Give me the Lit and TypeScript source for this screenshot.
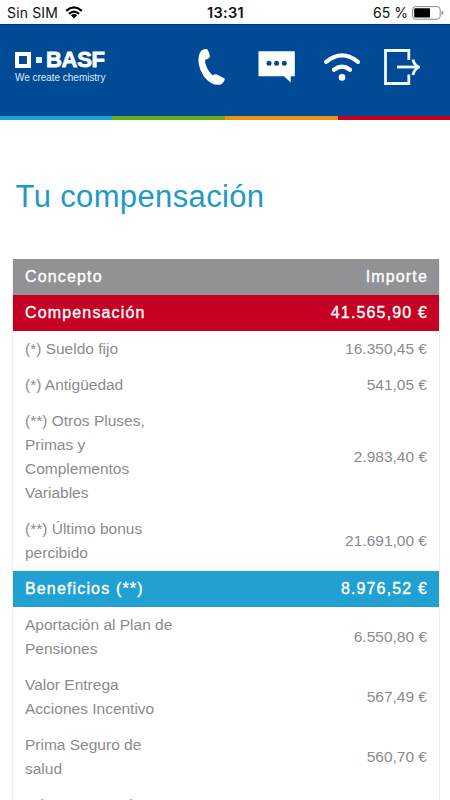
import { LitElement, html, css, svg } from "lit";
import { customElement } from "lit/decorators.js";
import { classMap } from "lit/directives/class-map.js";

interface Row {
  concept: string[];
  amount: string;
  kind?: "head" | "red" | "blue";
}

const ROWS: Row[] = [
  { concept: ["Concepto"], amount: "Importe", kind: "head" },
  { concept: ["Compensación"], amount: "41.565,90 €", kind: "red" },
  { concept: ["(*) Sueldo fijo"], amount: "16.350,45 €" },
  { concept: ["(*) Antigüedad"], amount: "541,05 €" },
  { concept: ["(**) Otros Pluses,", "Primas y", "Complementos", "Variables"], amount: "2.983,40 €" },
  { concept: ["(**) Último bonus", "percibido"], amount: "21.691,00 €" },
  { concept: ["Beneficios (**)"], amount: "8.976,52 €", kind: "blue" },
  { concept: ["Aportación al Plan de", "Pensiones"], amount: "6.550,80 €" },
  { concept: ["Valor Entrega", "Acciones Incentivo"], amount: "567,49 €" },
  { concept: ["Prima Seguro de", "salud"], amount: "560,70 €" },
  { concept: ["Prima Seguro de"], amount: "" },
];

@customElement("status-bar")
export class StatusBar extends LitElement {
  static styles = css`
    :host {
      display: grid;
      grid-template-columns: 1fr auto 1fr;
      align-items: center;
      height: 24px;
      box-sizing: border-box;
      padding: 1px 6px 0 7px;
      background: #fff;
      color: #111;
      font: 14px/22px Inter, "Liberation Sans", sans-serif;
    }
    .side { display: flex; align-items: center; }
    .carrier { gap: 7px; letter-spacing: 0.15px; }
    .clock { font-weight: 600; font-size: 14.5px; letter-spacing: 0.3px; }
    .power { justify-content: flex-end; gap: 4px; letter-spacing: 0; }
    svg { display: block; }
  `;
  render() {
    return html`
      <div class="side carrier">
        <span>Sin SIM</span>
        <svg width="18" height="13" viewBox="0 0 18 13">
          <g fill="none" stroke="#000" stroke-width="2.3">
            <path d="M1.2 4.8Q9-2 16.8 4.8" />
            <path d="M4 7.8Q9 3.4 14 7.8" />
          </g>
          <path d="M5.8 9.3Q9 6.8 12.2 9.3L9 12.5z" />
        </svg>
      </div>
      <div class="clock">13:31</div>
      <div class="side power">
        <span>65 %</span>
        <svg width="32" height="14" viewBox="0 0 32 14">
          <rect x=".6" y=".6" width="27.6" height="12.6" rx="3" fill="none" stroke="#888" />
          <rect x="2.2" y="2.2" width="15.8" height="9.4" rx="1" />
          <path d="M29.6 4.7q2 .6 2 2.2t-2 2.2z" fill="#888" />
        </svg>
      </div>
    `;
  }
}

@customElement("brand-header")
export class BrandHeader extends LitElement {
  static styles = css`
    :host {
      display: block;
      height: 96px;
      background: #004a96;
      box-shadow: inset 0 1px #00347f;
      color: #fff;
      font-family: "Liberation Sans", Arial, sans-serif;
    }
    .bar {
      display: flex;
      justify-content: space-between;
      height: 92px;
      box-sizing: border-box;
      padding: 23px 30px 0 15px;
    }
    .logo { padding-top: 4px; }
    .mark { display: flex; align-items: center; height: 17px; }
    .square { width: 8px; height: 8px; border: 4px solid #fff; }
    .dot { width: 6px; height: 6px; margin: 0 4px 0 5px; background: #e4f4ff; }
    .name {
      font-weight: 700;
      font-size: 22px;
      line-height: 17px;
      letter-spacing: -0.3px;
      -webkit-text-stroke: 0.8px #fff;
    }
    .claim {
      margin-top: 4px;
      font-size: 10px;
      line-height: 12px;
      letter-spacing: -0.03px;
      white-space: nowrap;
      color: #dcecff;
    }
    .icons { display: block; width: 224px; height: 40px; }
    .stripe { display: grid; grid-template-columns: 112px 113px 113px 112px; height: 4px; }
    .sky { background: #21a0d2; }
    .green { background: #65ac1e; }
    .orange { background: #e8951a; }
    .crimson { background: #c50022; }
  `;
  render() {
    return html`
      <div class="bar">
        <div class="logo">
          <div class="mark">
            <div class="square"></div>
            <div class="dot"></div>
            <div class="name">BASF</div>
          </div>
          <div class="claim">We create chemistry</div>
        </div>
        <svg class="icons" viewBox="196 47 224 40">
          ${svg`
            <path fill="#fff" d="M201.500 50.500Q204.500 48.600 207.200 49.200Q208.900 51 210 56.700Q208.500 59 205 59.900Q205.200 68 212.500 75.300Q215.500 73.600 217.800 75L224.600 78.500Q225.300 80.500 221.800 84Q217 86 211.500 83.300Q201.500 77.500 198.700 64Q197.600 54.500 201.500 50.500Z"/>
            <path fill="#fff" d="M258.500 51.300H294.800V76.300H290.700V82.400L284 76.300H258.500Z"/>
            <g fill="#004a96"><circle cx="269" cy="63.200" r="2.500"/><circle cx="276.600" cy="63.200" r="2.500"/><circle cx="284.300" cy="63.200" r="2.500"/></g>
            <g fill="none" stroke="#fff" stroke-width="4.200" stroke-linecap="round">
              <path d="M326.200 61.800Q342 48.800 357.900 61.800"/>
              <path d="M334 69.700Q342 63.700 350 69.700"/>
            </g>
            <circle cx="342" cy="77.400" r="3.300" fill="#fff"/>
            <g fill="none" stroke="#f2f9ff" stroke-width="2.800">
              <path d="M408.800 60V50.500H385.500V83.500H408.800V74.500"/>
              <path d="M397 67H418"/>
              <path d="M413 59.500Q414 65 418.800 67Q414 69.500 413 75"/>
            </g>`}
        </svg>
      </div>
      <div class="stripe">
        <div class="sky"></div><div class="green"></div>
        <div class="orange"></div><div class="crimson"></div>
      </div>
    `;
  }
}

@customElement("app-root")
export class AppRoot extends LitElement {
  static styles = css`
    :host {
      display: block;
      height: 800px;
      overflow: hidden;
      background: #fff;
      font-family: "Liberation Sans", Arial, sans-serif;
    }
    .title {
      margin: 57px 0 0 15.5px;
      font-weight: 400;
      font-size: 31px;
      line-height: 40px;
      letter-spacing: 0.36px;
      color: #2199c7;
    }
    .table { margin: 42px 10px 0 12px; border: solid #eee; border-width: 0 1px; }
    .row {
      display: flex;
      justify-content: space-between;
      align-items: center;
      padding: 6px 12px;
      font-size: 15.5px;
      line-height: 24px;
      letter-spacing: 0;
      color: #8b8b8e;
    }
    .line { display: block; white-space: nowrap; }
    .strong {
      color: #fff;
      font-size: 16px;
      letter-spacing: 1.15px;
      -webkit-text-stroke: 0.35px #fff;
    }
    .strong .amount { margin-right: -1px; }
    .head { background: #919296; }
    .red { background: #c50022; }
    .blue { background: #21a0d2; }
  `;
  render() {
    return html`
      <status-bar></status-bar>
      <brand-header></brand-header>
      <h1 class="title">Tu compensación</h1>
      <div class="table">
        ${ROWS.map(
          (r) => html`<div
            class=${classMap({
              row: true,
              strong: !!r.kind,
              head: r.kind === "head",
              red: r.kind === "red",
              blue: r.kind === "blue",
            })}
          >
            <div>${r.concept.map((t) => html`<span class="line">${t}</span>`)}</div>
            <div class="amount">${r.amount}</div>
          </div>`
        )}
      </div>
    `;
  }
}
